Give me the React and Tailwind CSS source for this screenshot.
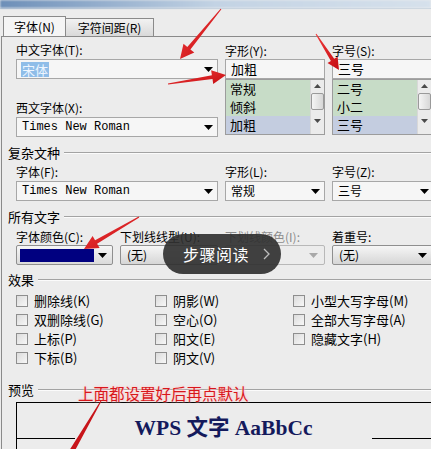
import React from 'react';

const ui = { fontFamily: '"Noto Sans CJK SC", "DejaVu Sans", sans-serif' };
const mono = { fontFamily: '"Liberation Mono", "DejaVu Sans Mono", monospace' };

function Caret({ dim }) {
  return (
    <svg width="9" height="5" viewBox="0 0 9 5" className="shrink-0">
      <path d="M0 0H9L4.5 5Z" fill={dim ? '#a8a8a8' : '#000'} />
    </svg>
  );
}

function Label({ children, dim, className = '' }) {
  return (
    <div className={`text-[12px] leading-[16px] whitespace-nowrap ${dim ? 'text-[#8c8c8c]' : 'text-black'} ${className}`}>
      {children}
    </div>
  );
}

function Combo({ children, useMono, className = '' }) {
  return (
    <div className={`h-[20px] flex items-center justify-between border border-[#a7a7a7] bg-[#f6f6f6] pl-[5px] pr-[4px] ${className}`}>
      <div className="text-[12px] leading-[16px] whitespace-nowrap text-black" style={useMono ? mono : undefined}>
        {children}
      </div>
      <Caret />
    </div>
  );
}

function Field({ children, className = '' }) {
  return (
    <div className={`h-[20px] flex items-center border border-[#a7a7a7] bg-[#f6f6f6] pl-[5px] text-[13px] leading-[16px] text-black ${className}`}>
      {children}
    </div>
  );
}

function GradButton({ children, dim, className = '' }) {
  return (
    <div
      className={`h-[20px] flex items-center justify-between rounded-[2px] border px-[6px] text-[12px] ${
        dim
          ? 'border-[#b8b8b8] bg-[#ececec] text-[#9a9a9a]'
          : 'border-[#8f8f8f] bg-gradient-to-b from-[#f6f6f6] to-[#d6d6d6] text-black'
      } ${className}`}
    >
      <span>{children}</span>
      <Caret dim={dim} />
    </div>
  );
}

function ListBox({ items }) {
  return (
    <div className="h-[56px] flex border border-[#9c9c9c] bg-[#f4f4f4]">
      <div className="flex-1 flex flex-col">
        {items.map((it, i) => (
          <div
            key={it}
            className={`h-[18px] flex items-center pl-[4px] text-[13px] text-black ${
              i === items.length - 1 ? 'bg-[#c4cde0]' : 'bg-[#c7dcc7]'
            }`}
          >
            {it}
          </div>
        ))}
      </div>
      <div className="w-[14px] flex flex-col items-center bg-[#ebebeb] border-l border-[#d8d8d8] pt-[4px]">
        <svg width="7" height="4" viewBox="0 0 7 4"><path d="M0 4H7L3.5 0Z" fill="#4a4a4a" /></svg>
        <div className="mt-[5px] w-[13px] h-[17px] rounded-[2px] border border-[#9a9a9a] bg-gradient-to-r from-[#f5f5f5] to-[#d7d7d7]" />
        <svg width="7" height="4" viewBox="0 0 7 4" className="mt-[9px]"><path d="M0 0H7L3.5 4Z" fill="#4a4a4a" /></svg>
      </div>
    </div>
  );
}

function Section({ title, className = '' }) {
  return (
    <div className={`flex items-center ${className}`}>
      <span className="text-[13px] leading-[16px] text-black whitespace-nowrap">{title}</span>
      <div className="flex-1 ml-[4px] flex flex-col">
        <div className="h-px bg-[#a3a3a3]" />
        <div className="h-px bg-[#fbfbfb]" />
      </div>
    </div>
  );
}

function Check({ label }) {
  return (
    <div className="h-[19px] flex items-center gap-[6px]">
      <div className="w-[12px] h-[12px] border border-[#8e8e8e] bg-gradient-to-br from-[#dcdcdc] to-[#f7f7f7]" />
      <span className="text-[13px] text-black whitespace-nowrap">{label}</span>
    </div>
  );
}

// tapered red pointer: thin at the tail, fat arrowhead at the tip
function arrowPoints(tail, tip, { w0 = 1, w1 = 4, hw = 7, hl = 14 } = {}) {
  const dx = tip[0] - tail[0];
  const dy = tip[1] - tail[1];
  const len = Math.hypot(dx, dy);
  const ux = dx / len, uy = dy / len;
  const nx = -uy, ny = ux;
  const bx = tip[0] - ux * hl, by = tip[1] - uy * hl;
  const p = (x, y) => `${x.toFixed(1)},${y.toFixed(1)}`;
  return [
    p(tail[0] + nx * w0 / 2, tail[1] + ny * w0 / 2),
    p(bx + nx * w1 / 2, by + ny * w1 / 2),
    p(bx + nx * hw, by + ny * hw),
    p(tip[0], tip[1]),
    p(bx - nx * hw, by - ny * hw),
    p(bx - nx * w1 / 2, by - ny * w1 / 2),
    p(tail[0] - nx * w0 / 2, tail[1] - ny * w0 / 2),
  ].join(' ');
}

const pointers = [
  { tail: [221, 9], tip: [180, 59] },
  { tail: [168, 84], tip: [226, 75] },
  { tail: [316, 34], tip: [339, 70], opt: { hw: 6, hl: 12 } },
  { tail: [139, 217], tip: [84, 249] },
];

export default function App() {
  return (
    <div className="relative w-[431px] h-[449px] overflow-hidden bg-[#ececec]" style={ui}>
      {/* window caption, out of focus */}
      <div className="h-[8px] bg-gradient-to-r from-[#6d8fb8] via-[#c3d3e4] to-[#d6e1ec] blur-[1px]" />
      <div className="h-px bg-[#c9d3dc]" />

      {/* tabs */}
      <div className="mt-[7px] h-[20px] flex items-end pl-[3px]">
        <div className="w-[63px] h-[20px] flex items-center justify-center border border-b-0 border-[#8a8a8a] bg-[#f5f5f5] text-[12px] text-black">
          字体(N)
        </div>
        <div className="w-[88px] h-[18px] flex items-center justify-center border border-l-0 border-b-0 border-[#8a8a8a] bg-gradient-to-b from-[#f2f2f2] to-[#d9d9d9] text-[12px] text-black">
          字符间距(R)
        </div>
      </div>

      <div className="ml-[1px] w-[440px] border-t border-l border-[#8a8a8a] pl-[6px] h-[420px]">
        {/* Chinese / western fonts */}
        <div className="pl-[8px] flex gap-[7px]">
          <div className="w-[202px] shrink-0 flex flex-col">
            <Label className="mt-[5px]">中文字体(T):</Label>
            <div className="mt-[1px] h-[20px] flex items-center justify-between border border-[#a7a7a7] bg-[#f6f6f6] pl-[4px] pr-[4px]">
              <span className="bg-[#8fbde8] text-[#eef6ff] text-[13px] leading-[15px] px-[1px]">宋体</span>
              <Caret />
            </div>
            <Label className="mt-[21px]">西文字体(X):</Label>
            <Combo useMono className="mt-[1px]">Times New Roman</Combo>
          </div>
          <div className="w-[100px] shrink-0 flex flex-col">
            <Label className="mt-[6px]">字形(Y):</Label>
            <Field>加粗</Field>
            <ListBox items={['常规', '倾斜', '加粗']} />
          </div>
          <div className="w-[100px] shrink-0 flex flex-col">
            <Label className="mt-[6px]">字号(S):</Label>
            <Field className="mr-[-6px]">三号</Field>
            <ListBox items={['二号', '小二', '三号']} />
          </div>
        </div>

        {/* complex script */}
        <Section title="复杂文种" className="mt-[8px]" />
        <div className="pl-[8px] flex gap-[7px]">
          <div className="w-[202px] shrink-0 flex flex-col">
            <Label className="mt-[3px]">字体(F):</Label>
            <Combo useMono className="mt-[1px]">Times New Roman</Combo>
          </div>
          <div className="w-[100px] shrink-0 flex flex-col">
            <Label className="mt-[3px]">字形(L):</Label>
            <Combo className="mt-[1px]">常规</Combo>
          </div>
          <div className="w-[102px] shrink-0 flex flex-col">
            <Label className="mt-[3px]">字号(Z):</Label>
            <Combo className="mt-[1px]">三号</Combo>
          </div>
        </div>

        {/* all text */}
        <Section title="所有文字" className="mt-[8px]" />
        <div className="pl-[8px] flex gap-[7px]">
          <div className="w-[97px] shrink-0 flex flex-col">
            <Label className="mt-[4px]">字体颜色(C):</Label>
            <div className="h-[20px] flex items-center justify-between rounded-[2px] border border-[#8f8f8f] bg-gradient-to-b from-[#f6f6f6] to-[#dadada] pl-[3px] pr-[5px]">
              <div className="w-[74px] h-[13px] bg-[#000080]" />
              <Caret />
            </div>
          </div>
          <div className="w-[98px] shrink-0 flex flex-col">
            <Label className="mt-[4px]">下划线线型(U):</Label>
            <GradButton>(无)</GradButton>
          </div>
          <div className="w-[100px] shrink-0 flex flex-col">
            <Label dim className="mt-[4px]">下划线颜色(I):</Label>
            <GradButton dim />
          </div>
          <div className="w-[102px] shrink-0 flex flex-col">
            <Label className="mt-[4px]">着重号:</Label>
            <GradButton>(无)</GradButton>
          </div>
        </div>

        {/* effects */}
        <Section title="效果" className="mt-[7px]" />
        <div className="pl-[8px] mt-[3px] grid grid-cols-[139px_138px_1fr]">
          <div className="flex flex-col">
            <Check label="删除线(K)" />
            <Check label="双删除线(G)" />
            <Check label="上标(P)" />
            <Check label="下标(B)" />
          </div>
          <div className="flex flex-col">
            <Check label="阴影(W)" />
            <Check label="空心(O)" />
            <Check label="阳文(E)" />
            <Check label="阴文(V)" />
          </div>
          <div className="flex flex-col">
            <Check label="小型大写字母(M)" />
            <Check label="全部大写字母(A)" />
            <Check label="隐藏文字(H)" />
          </div>
        </div>

        {/* preview */}
        <Section title="预览" className="mt-[15px]" />
        <div className="ml-[8px] mt-[4px] w-[415px] h-[60px] border-t border-l border-black">
          <div className="h-[36px] flex items-end">
            <div className="w-[58px] h-px bg-black" />
            <div className="flex-1 flex justify-center">
              <span
                className="text-[21.5px] leading-[24px] font-bold text-[#141a5c] whitespace-nowrap mb-[-1px]"
                style={{ fontFamily: '"Liberation Serif", "Noto Sans CJK SC", serif' }}
              >
                WPS 文字 AaBbCc
              </span>
            </div>
            <div className="w-[59px] h-px bg-black" />
          </div>
        </div>
      </div>

      {/* annotation note over the preview frame */}
      <div
        className="absolute left-[78px] top-[384px] text-[15.5px] leading-[18px] text-[#d8171c] whitespace-nowrap"
        style={{ textShadow: '0 0 3px #ffc2c2, 0 0 2px #ffd6d6' }}
      >
        上面都设置好后再点默认
      </div>

      {/* step-reading pill */}
      <div className="absolute left-[163px] top-[234px] w-[118px] h-[40px] rounded-full bg-[#2e2e2e]/90 flex items-center pl-[20px] gap-[14px]">
        <span className="text-[16px] text-white tracking-[0.5px]">步骤阅读</span>
        <svg width="7" height="12" viewBox="0 0 7 12"><path d="M1 1L6 6L1 11" fill="none" stroke="#bdbdbd" strokeWidth="1.3" /></svg>
      </div>

      {/* red pointers */}
      <svg className="absolute inset-0 pointer-events-none" width="431" height="449" viewBox="0 0 431 449">
        <defs>
          <linearGradient id="redfill" x1="0" y1="0" x2="1" y2="1">
            <stop offset="0" stopColor="#f03a3a" />
            <stop offset="1" stopColor="#c50d12" />
          </linearGradient>
        </defs>
        {pointers.map((a, i) => (
          <polygon key={i} points={arrowPoints(a.tail, a.tip, a.opt)} fill="url(#redfill)" />
        ))}
        <polygon points={arrowPoints([101, 401], [62, 468], { w0: 1, w1: 6, hw: 4, hl: 4 })} fill="#c8141a" />
      </svg>
    </div>
  );
}
